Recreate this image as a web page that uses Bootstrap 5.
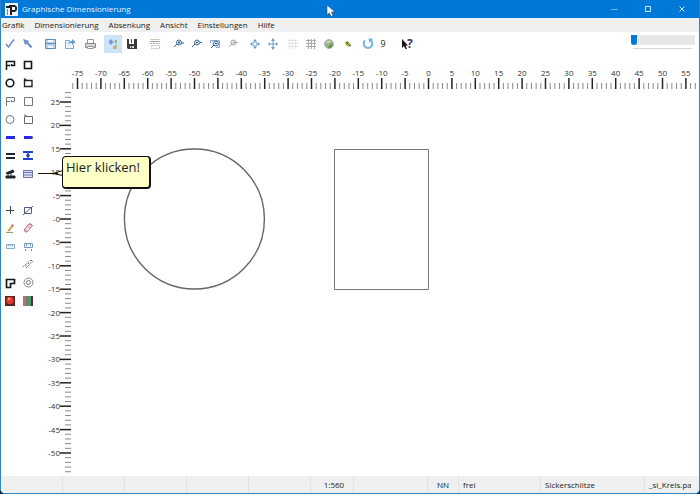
<!DOCTYPE html>
<html lang="de">
<head>
<meta charset="utf-8">
<meta name="viewport" content="width=device-width, initial-scale=1">
<title>Graphische Dimensionierung</title>
<link href="https://cdn.jsdelivr.net/npm/bootstrap@5.3.0/dist/css/bootstrap.min.css" rel="stylesheet">
<style>
body{font-family:"Open Sans","Noto Sans",sans-serif;font-size:8px;line-height:12px;color:#222;background:#fff;padding-bottom:3px}
.frame{background:#0b1f38}
.app{border:1px solid #2b86cc;border-top:0;border-radius:0 0 5px 5px;background:#fff}
.titlebar{background:#0078d7;height:18px;padding-left:4px}
.app-title{font-size:8px;line-height:12px;font-weight:400;color:#e4f3ff;margin-left:4px}
.win-btn{width:34px;height:16px}
.menubar{background:#f0f0f0;height:14px;gap:10px;padding-left:1px}
.menubar a{color:#222}
.toolbar{height:24px;padding-right:4px}
.tool{width:18px;height:18px;border-radius:0}
.tool svg,.win-btn svg{display:block}
.tool.active{background:#cce4f7}
.s1{margin-left:1px}.s2{margin-left:2px}.s5{margin-left:5px}
.counter{width:12px;font-size:9px}
.zoomer{width:64px}
.zoomer input{-webkit-appearance:none;appearance:none;height:10px;background:#e6e7e9}
.zoomer input::-webkit-slider-thumb{-webkit-appearance:none;width:6px;height:10px;background:#0078d7;border-radius:0 0 3px 3px}
.zoom-line{height:1px;background:#d6d6d6;margin:3px 3px 5px 2px}
.palette{width:37px}
.pal-grid{display:grid;grid-template-columns:18px 18px}
.pal-grid + .pal-grid{margin-top:19px}
.plot{min-height:0}
.plan-area svg{width:100%;height:100%;display:block}
.plan-area text{font-size:8px;fill:#333}
.callout-line{left:37px;top:100px}
.callout-box{left:61px;top:100px;width:89px;height:33px;background:#ffffc8;border:1px solid #111;border-width:1px 2px 2px 1px;border-radius:4px;padding:1px 3px;font-size:13px;line-height:18px;color:#222}
.pointer{left:325px;top:4px}
.statusbar{background:#f0f0f0;height:17px;border-radius:0 0 4px 4px}
.cell{border-right:1px solid #e2e2e2;line-height:18px;white-space:nowrap;overflow:hidden;height:17px;flex-shrink:0}
.c62{width:62px}.c43{width:43px}.c74{width:74px}.c31{width:31px}.c82{width:82px}.c104{width:104px}
.last-cell{flex-basis:0;min-width:0}
</style>
<script src="https://cdn.jsdelivr.net/npm/bootstrap@5.3.0/dist/js/bootstrap.bundle.min.js"></script>
</head>
<body class="vh-100 overflow-hidden">
<div class="frame h-100">
<div class="app h-100 d-flex flex-column position-relative overflow-hidden">
<header class="titlebar d-flex align-items-center flex-shrink-0">
<svg width="13" height="13" viewBox="0 0 13 13"><path d="M0 0h13v13H0z" fill="#eef3f7"/><path d="M1 3h3V2h6l2 2v3l-2 2H7v3H5V5H1z" fill="#222"/><path d="M7 4h3v3H7z" fill="#f5f8fa"/><path d="M2 6h1v6H2z" fill="#888"/></svg>
<h1 class="app-title mb-0 me-auto">Graphische Dimensionierung</h1>
<button class="btn border-0 p-0 win-btn d-flex align-items-center justify-content-center" aria-label="Minimieren"><svg width="8" height="8"><path d="M1 4.500h7" stroke="#6fb8ee"/></svg></button>
<button class="btn border-0 p-0 win-btn d-flex align-items-center justify-content-center" aria-label="Maximieren"><svg width="8" height="8"><path d="M1.500 1.500h5v5h-5z" fill="none" stroke="#c9e8ff"/></svg></button>
<button class="btn border-0 p-0 win-btn d-flex align-items-center justify-content-center" aria-label="Schließen"><svg width="8" height="8"><path d="M1.500 1.500l5 5m0-5l-5 5" stroke="#d9efff"/></svg></button>
</header>
<nav class="menubar d-flex align-items-center flex-shrink-0">
<a class="text-decoration-none" href="#">Grafik</a><a class="text-decoration-none" href="#">Dimensionierung</a><a class="text-decoration-none" href="#">Absenkung</a><a class="text-decoration-none" href="#">Ansicht</a><a class="text-decoration-none" href="#">Einstellungen</a><a class="text-decoration-none" href="#">Hilfe</a>
</nav>
<div class="toolbar d-flex align-items-center flex-shrink-0">
<button class="btn border-0 p-0 tool" aria-label="Übernehmen"><svg width="18" height="18"><path d="M5 9l2.500 3L13 4.500" fill="none" stroke="#6d8fc4" stroke-width="1.600"/></svg></button>
<button class="btn border-0 p-0 tool" aria-label="Auswählen"><svg width="18" height="18"><path d="M4 4l6.500 2-1.500 1 4.500 5-2 1-4-4.500L6 10z" fill="#6f8ccc"/></svg></button>
<button class="btn border-0 p-0 tool ms-1" aria-label="Speichern"><svg width="18" height="18"><path d="M4.500 4.500h10v9h-10z" fill="#b9d3ee" stroke="#5d8fc0"/><path d="M7 5h5v2H7zM7 11h5v2H7z" fill="#f5faff"/><path d="M4 8.500h11" stroke="#5d8fc0"/></svg></button>
<button class="btn border-0 p-0 tool s2" aria-label="Exportieren"><svg width="18" height="18"><path d="M9 5.500H4.500v8h8V10" fill="#edf5fc" stroke="#79a9d4"/><path d="M7 10c0-3 2-4 4-4V4l3.500 3L11 10V8c-2 0-3 0-4 2z" fill="#5d9bd0"/></svg></button>
<button class="btn border-0 p-0 tool s2" aria-label="Drucken"><svg width="18" height="18"><path d="M6.500 9V4.500h6V9" fill="#fff" stroke="#999"/><path d="M4.500 8.500h10v4h-10z" fill="#d5d6d9" stroke="#888"/><path d="M6.500 11.500h6v2h-6z" fill="#fff" stroke="#999"/></svg></button>
<button class="btn border-0 p-0 tool active s5" aria-label="Objekte"><svg width="18" height="18"><path d="M7 4l2.500 3L7 10 4.500 7z" fill="#7199d0"/><path d="M8 7h4v5H9" fill="none" stroke="#9aabc0"/><path d="M11 5h2v2h-2z" fill="#bba77b"/><path d="M9 11h4v3H9z" fill="#c0ae7c"/></svg></button>
<button class="btn border-0 p-0 tool s1" aria-label="Sichern"><svg width="18" height="18"><path d="M4 4h10v10H5l-1-1z" fill="#3a3a3a"/><path d="M6 4h5v5H6z" fill="#f8f8f8"/><path d="M8 4h1v4H8z" fill="#444"/><path d="M7 11h4v2H7z" fill="#ddd"/><path d="M8 11h1v2H8z" fill="#555"/></svg></button>
<button class="btn border-0 p-0 tool s5" aria-label="Fenster"><svg width="18" height="18"><path d="M4.500 4.500h9" stroke="#cfc3b0"/><path d="M4 6.500h10" stroke="#a2a5ab"/><path d="M4 8.500h10" stroke="#aeb3ba" stroke-dasharray="2 1"/><path d="M5.500 10.500h8v3h-8z" fill="none" stroke="#b6c4b2" stroke-dasharray="2 1"/></svg></button>
<button class="btn border-0 p-0 tool s5" aria-label="Vergrößern"><svg width="18" height="18"><circle cx="10" cy="7.500" r="2.500" fill="#cfe0f0" stroke="#446e95"/><path d="M8 9l-3 3M9 7.500h2M10 6.500v2M12 8h3" stroke="#335b82" fill="none"/></svg></button>
<button class="btn border-0 p-0 tool" aria-label="Verkleinern"><svg width="18" height="18"><circle cx="10" cy="7.500" r="2.500" fill="#cfe0f0" stroke="#446e95"/><path d="M8 9l-3 3M9 7.500h2M13 7.500h2" stroke="#335b82" fill="none"/></svg></button>
<button class="btn border-0 p-0 tool s1" aria-label="Ausschnitt"><svg width="18" height="18"><path d="M4.500 8V5.500h9v7H10" fill="#e3eefa" stroke="#8badd0"/><circle cx="10" cy="8.500" r="2.500" fill="#cfe0f0" stroke="#446e95"/><path d="M8 10l-3 3M9 8.500h2" stroke="#335b82"/></svg></button>
<button class="btn border-0 p-0 tool" aria-label="Vorheriger Ausschnitt"><svg width="18" height="18"><circle cx="9.500" cy="7.500" r="2.500" fill="#ddd" stroke="#aaa"/><path d="M8 9l-3 3M9 7.500h5" stroke="#aaa"/></svg></button>
<button class="btn border-0 p-0 tool ms-1" aria-label="Zentrieren"><svg width="18" height="18"><path d="M9 4l2 2.500H7zM9 14l2-2.500H7zM4 9l2.500-2v4zM14 9l-2.500-2v4z" fill="#5f96c6"/><circle cx="9" cy="9" r="2" fill="none" stroke="#87b0d4"/></svg></button>
<button class="btn border-0 p-0 tool" aria-label="Verschieben"><svg width="18" height="18"><path d="M9 5v8M5 9h8" stroke="#6fa0cb"/><path d="M9 3l2 3H7zM9 15l2-3H7zM4 9l2-2v4zM14 9l-2-2v4z" fill="#6fa0cb"/></svg></button>
<button class="btn border-0 p-0 tool s2" aria-label="Punktraster"><svg width="18" height="18"><path d="M5.500 4v10M8.500 4v10M11.500 4v10M4 5.500h10M4 8.500h10M4 11.500h10" stroke="#e2e2e2"/></svg></button>
<button class="btn border-0 p-0 tool" aria-label="Raster"><svg width="18" height="18"><path d="M6.500 4v10M9.500 4v10M12.500 4v10M4 5.500h10M4 8.500h10M4 11.500h10" stroke="#aaa"/></svg></button>
<button class="btn border-0 p-0 tool" aria-label="Karte"><svg width="18" height="18"><circle cx="9" cy="9" r="4.500" fill="#9aae8c" stroke="#b3bbb0"/><path d="M6 8q2-3 5-2-1 2-5 2z" fill="#dbe4d0"/><path d="M8 13q4 1 5-4-3 0-5 4" fill="#5a9440"/></svg></button>
<button class="btn border-0 p-0 tool s1" aria-label="Messpunkt"><svg width="18" height="18"><path d="M6 7l3-1 3 4-2 2-3-2z" fill="#9aad45"/><path d="M7 7l2 2M10 10l2 1" stroke="#4b5729"/></svg></button>
<button class="btn border-0 p-0 tool s2" aria-label="Rückgängig"><svg width="18" height="18"><path d="M6 5.500a4.300 4.300 0 1 0 6 0" fill="none" stroke="#6fb5df" stroke-width="2"/><path d="M9.500 3.500H14L10.500 8z" fill="#6fb5df"/></svg></button>
<span class="counter text-center">9</span>
<button class="btn border-0 p-0 tool ms-2" aria-label="Kontexthilfe"><svg width="18" height="18"><path d="M5 4v9l2-2 1.500 3H10l-1.300-3.500H11z" fill="#161616"/><text x="10" y="13" font-size="12" font-weight="700" fill="#403080">?</text></svg></button>
<div class="zoomer ms-auto"><input class="d-block w-100 m-0" type="range" min="0" max="100" value="0" aria-label="Zoom"><div class="zoom-line"></div></div>
</div>
<main class="d-flex flex-fill plot position-relative overflow-hidden">
<aside class="palette flex-shrink-0">
<div class="pal-grid">
<button class="btn border-0 p-0 tool" aria-label="Polygon"><svg width="18" height="18"><path d="M5.500 14V5.500h8V9.500H10.500V8M5 9.500h4" fill="none" stroke="#151515" stroke-width="1.500"/></svg></button>
<button class="btn border-0 p-0 tool" aria-label="Rechteck"><svg width="18" height="18"><path d="M5.500 5.500h7v7h-7z" fill="none" stroke="#151515" stroke-width="1.600"/></svg></button>
<button class="btn border-0 p-0 tool" aria-label="Kreis"><svg width="18" height="18"><circle cx="9" cy="9" r="3.800" fill="none" stroke="#151515" stroke-width="1.600"/></svg></button>
<button class="btn border-0 p-0 tool" aria-label="Gedrehtes Rechteck"><svg width="18" height="18"><path d="M5.500 6.500h7.500v6H5.500zM5 4.500l3 2" fill="none" stroke="#252525" stroke-width="1.400"/></svg></button>
<button class="btn border-0 p-0 tool" aria-label="Polygon dünn"><svg width="18" height="18"><path d="M5.500 14V5.500h8V9.500H10.500V8M5 9.500h4" fill="none" stroke="#777"/></svg></button>
<button class="btn border-0 p-0 tool" aria-label="Rechteck dünn"><svg width="18" height="18"><path d="M5.500 5.500h8v8h-8z" fill="none" stroke="#777"/></svg></button>
<button class="btn border-0 p-0 tool" aria-label="Kreis dünn"><svg width="18" height="18"><circle cx="9" cy="9.500" r="4" fill="none" stroke="#777"/></svg></button>
<button class="btn border-0 p-0 tool" aria-label="Gedrehtes Rechteck dünn"><svg width="18" height="18"><path d="M5.500 6.500h8v7h-8zM5 4.500l3 2" fill="none" stroke="#666"/></svg></button>
<button class="btn border-0 p-0 tool" aria-label="Linie"><svg width="18" height="18"><path d="M5 9.500h9" stroke="#2828e8" stroke-width="3"/></svg></button>
<button class="btn border-0 p-0 tool" aria-label="Linie mit Endpunkt"><svg width="18" height="18"><path d="M5 9.500h8" stroke="#2828e8" stroke-width="3"/><path d="M12 9.500h2" stroke="#903058" stroke-width="2"/></svg></button>
<button class="btn border-0 p-0 tool" aria-label="Doppellinie"><svg width="18" height="18"><path d="M5 8h9M5 12h9" stroke="#252525" stroke-width="2"/></svg></button>
<button class="btn border-0 p-0 tool" aria-label="Mittelpunkt"><svg width="18" height="18"><path d="M4 6h10M4 13h10" stroke="#2440dc" stroke-width="2"/><path d="M9 6.500l2 3-2 3-2-3z" fill="#2440cc"/></svg></button>
<button class="btn border-0 p-0 tool" aria-label="Böschung"><svg width="18" height="18"><path d="M5 9l7-3 1 2-6 2zM5 12h9v2H5z" fill="#222" stroke="#222"/><path d="M10 9v3M7 10v2" stroke="#333"/></svg></button>
<button class="btn border-0 p-0 tool" aria-label="Sickerschlitze"><svg width="18" height="18"><path d="M4.500 6.500h9v7h-9z" fill="#dfe2f1" stroke="#6b78a4"/><path d="M5 8.500h8M5 11h8" stroke="#6577c0"/></svg></button>
</div>
<div class="pal-grid">
<button class="btn border-0 p-0 tool" aria-label="Punkt"><svg width="18" height="18"><path d="M9.500 5v8M5 9.500h8" stroke="#444"/></svg></button>
<button class="btn border-0 p-0 tool" aria-label="Bereich"><svg width="18" height="18"><path d="M5.500 6.500h7v6h-7zM4 14L14 5" fill="none" stroke="#555a85"/></svg></button>
<button class="btn border-0 p-0 tool" aria-label="Zeichnen"><svg width="18" height="18"><path d="M6 12l5-6 1.500 1-4 5.500z" fill="#c9a95c"/><path d="M10 7l1-2 2 1-1 2z" fill="#d27770"/><path d="M5 13.500h7" stroke="#97a06a"/></svg></button>
<button class="btn border-0 p-0 tool" aria-label="Radieren"><svg width="18" height="18"><path d="M5 11l5-6q2-1 3.500 1.500l-5 6q-2 2-3.500-1.500z" fill="#f0c5cb" stroke="#a66878"/><path d="M7 9l3 2" stroke="#fff"/></svg></button>
<button class="btn border-0 p-0 tool" aria-label="Abmessung"><svg width="18" height="18"><path d="M5.500 7.500h8v4h-8z" fill="#edf5fc" stroke="#8aabd0"/><path d="M7.500 8v1M9.500 8v1M11.500 8v1" stroke="#8aabd0"/></svg></button>
<button class="btn border-0 p-0 tool" aria-label="Maßlinie"><svg width="18" height="18"><path d="M5.500 6.500h8v4h-8zM7.500 7v2M11.500 7v2" fill="#edf5fc" stroke="#779cc8"/><path d="M6.500 12v2M12.500 12v2" stroke="#d8696e"/></svg></button>
<span></span>
<button class="btn border-0 p-0 tool" aria-label="Messen"><svg width="18" height="18"><path d="M4 12l8-7M7 13l7-7M6 10l3 2M9 8l2 2M12 5l2 2" fill="none" stroke="#777" stroke-dasharray="2 1"/></svg></button>
<button class="btn border-0 p-0 tool" aria-label="Kontur"><svg width="18" height="18"><path d="M5.500 6.500h8v4H9.500v4h-4z" fill="#fff" stroke="#151515" stroke-width="1.700"/></svg></button>
<button class="btn border-0 p-0 tool" aria-label="Brunnen"><svg width="18" height="18"><circle cx="9.500" cy="9.500" r="4.500" fill="none" stroke="#888"/><circle cx="9.500" cy="9.500" r="2" fill="none" stroke="#777"/></svg></button>
<button class="btn border-0 p-0 tool" aria-label="3D-Ansicht"><svg width="18" height="18"><path d="M4 5h10v10H4z" fill="#5a2524"/><circle cx="9" cy="9.500" r="3.700" fill="#e4382f"/><circle cx="8" cy="8" r="1.300" fill="#ff9d83"/></svg></button>
<button class="btn border-0 p-0 tool" aria-label="Farben"><svg width="18" height="18"><path d="M4 5h3v10H4z" fill="#bd6e6f"/><path d="M7 5h2v10H7z" fill="#777"/><path d="M9 5h3v10H9z" fill="#4b9b66"/><path d="M12 5h2v10h-2z" fill="#6b2730"/></svg></button>
</div>
</aside>
<div class="flex-fill overflow-hidden plan-area">
<svg role="img" aria-label="Zeichenfläche"><g id="scene" transform="translate(-38 -56)">
<circle cx="194.400" cy="219" r="70" fill="none" stroke="#666" stroke-width="1.400"/>
<path d="M334.500 149.500h94v140h-94z" fill="none" stroke="#777"/>
</g></svg>
</div>
<svg class="callout-line position-absolute" width="26" height="32" aria-hidden="true"><path d="M0 17.500h20M15 17.500l10-3v5z" fill="#ffffc8" stroke="#111"/></svg>
<div class="callout-box position-absolute" role="note">Hier klicken!</div>
</main>
<footer class="statusbar d-flex flex-shrink-0">
<div class="cell c62"></div><div class="cell c62"></div><div class="cell c62"></div><div class="cell c62"></div><div class="cell c62"></div>
<div class="cell c43 text-center ps-1">1:560</div><div class="cell c74"></div><div class="cell c31 text-center">NN</div><div class="cell c82 ps-1">frei</div><div class="cell c104 ps-1">Sickerschlitze</div><div class="cell last-cell border-0 ps-1 flex-fill me-2">_si_Kreis.pa</div>
</footer>
<svg class="pointer position-absolute" width="10" height="13" aria-hidden="true"><path d="M1 1v10l2.500-2 1.500 3.500 2-1L5.500 8H9z" fill="#fff" stroke="#345" stroke-width=".6"/></svg>
</div>
</div>
<script>
const scene=document.getElementById('scene'),NS='http://www.w3.org/2000/svg',unit=4.68,x0=428.5,y0=219;
function add(tag,attrs,label){const e=document.createElementNS(NS,tag);for(const k in attrs)e.setAttribute(k,attrs[k]);if(label!==undefined)e.textContent=label;scene.appendChild(e);}
for(let v=-76;v<=57;v++){const x=x0+v*unit,major=v%5===0;
  add('path',{d:`M${x} ${major?78:83}V89`,stroke:major?'#222':'#888','stroke-width':major?1.5:1});
  if(major)add('text',{x,y:76,'text-anchor':'middle'},v);}
for(let v=-54;v<=27;v++){const y=y0-v*unit,major=v%5===0;
  add('path',{d:`M${major?60:65} ${y}H71`,stroke:major?'#222':'#888','stroke-width':major?1.5:1});
  if(major)add('text',{x:60,y:y+3,'text-anchor':'end'},v===0||v===5?'-'+v:v);}
</script>
</body>
</html>
